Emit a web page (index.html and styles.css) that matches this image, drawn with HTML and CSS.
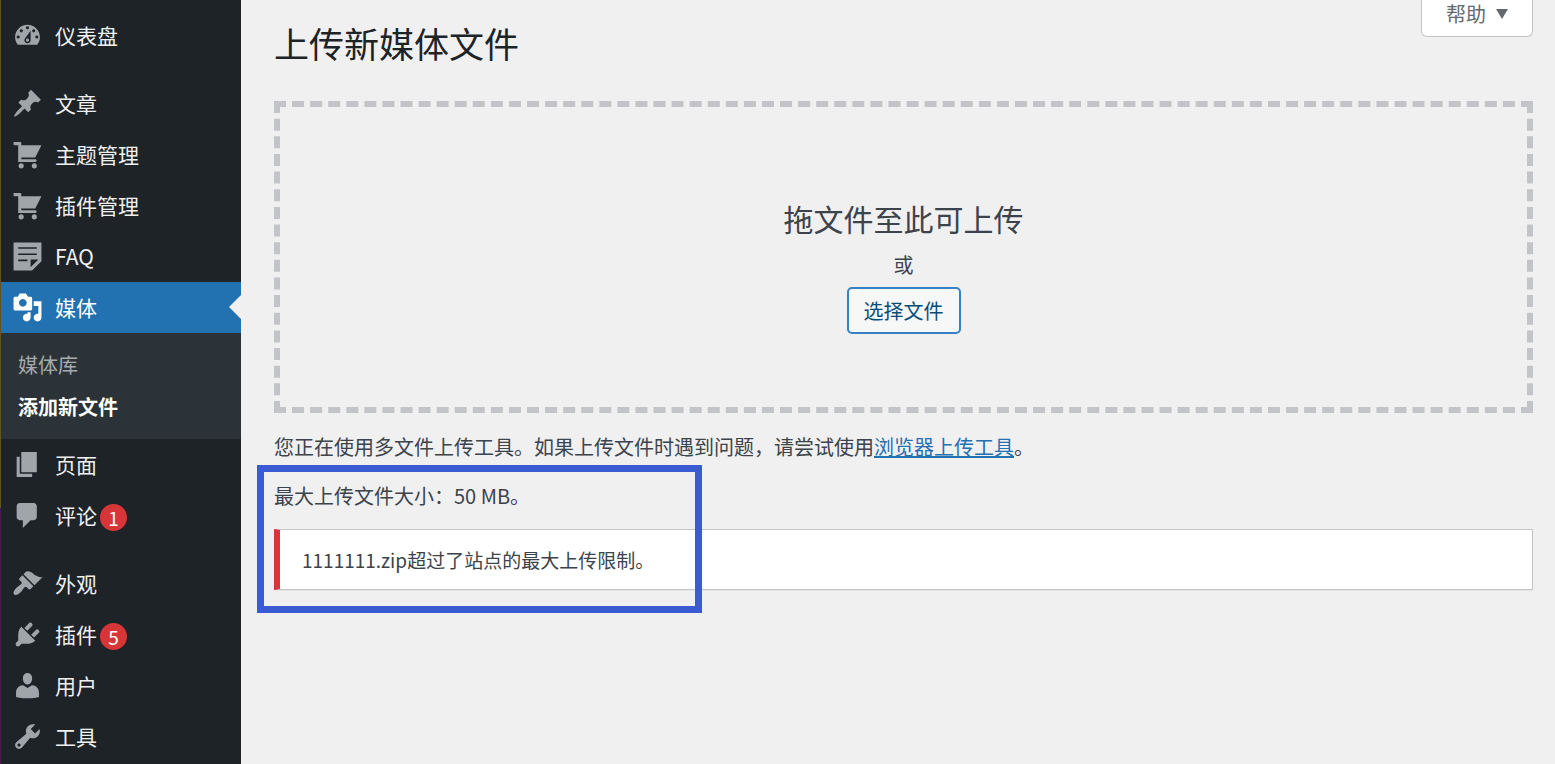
FILE: index.html
```html
<!DOCTYPE html>
<html lang="zh-CN">
<head>
  <meta charset="UTF-8">
  <meta name="viewport" content="width=device-width, initial-scale=1.0">
  <title>上传新媒体文件</title>
  <link rel="stylesheet" href="styles.css">
</head>
<body>
  <nav class="sidebar">
    <ul class="menu">
      <li><a class="menu-item" href="#">
        <svg class="icon" viewBox="0 0 20 20"><path d="M3.76 16h12.48C17.34 14.63 18 12.89 18 11c0-4.42-3.58-8-8-8s-8 3.58-8 8c0 1.89.66 3.63 1.76 5zM10 4c.55 0 1 .45 1 1s-.45 1-1 1-1-.45-1-1 .45-1 1-1zM6 6c.55 0 1 .45 1 1s-.45 1-1 1-1-.45-1-1 .45-1 1-1zm8 0c.55 0 1 .45 1 1s-.45 1-1 1-1-.45-1-1 .45-1 1-1zm-5.37 5.55L12 7v6c0 1.1-.9 2-2 2s-2-.9-2-2c0-.57.24-1.08.63-1.45zM4 10c.55 0 1 .45 1 1s-.45 1-1 1-1-.45-1-1 .45-1 1-1zm12 0c.55 0 1 .45 1 1s-.45 1-1 1-1-.45-1-1 .45-1 1-1zm-5 3c0-.55-.45-1-1-1s-1 .45-1 1 .45 1 1 1 1-.45 1-1z" fill-rule="evenodd"/></svg>
        <span class="label">仪表盘</span>
      </a></li>
      <li class="separator"></li>
      <li><a class="menu-item" href="#">
        <svg class="icon" viewBox="0 0 20 20"><path d="M10.44 3.02l1.82-1.82 6.36 6.35-1.83 1.82c-1.05-.68-2.48-.57-3.41.36l-.75.75c-.92.93-1.04 2.35-.35 3.41l-1.83 1.82-2.41-2.41-2.8 2.79c-.42.42-3.38 2.71-3.8 2.29s1.86-3.39 2.28-3.81l2.79-2.79L4.1 9.36l1.83-1.82c1.05.69 2.48.57 3.4-.36l.75-.75c.93-.92 1.05-2.35.36-3.41z"/></svg>
        <span class="label">文章</span>
      </a></li>
      <li><a class="menu-item" href="#">
        <svg class="icon" viewBox="0 0 20 20"><path d="M1 2h4.5c.3 0 .5.2.5.5V4h13l-4 8H6v1h9c.5 0 .9.4.9.9s-.4.9-.9.9H4V4H1.6C1.3 4 1 3.700 1 3.400zM5.900 15.700c1 0 1.700.7 1.700 1.650S6.900 19 5.900 19s-1.650-.7-1.650-1.650.7-1.650 1.650-1.650zm8.500 0c1 0 1.650.7 1.650 1.650S15.400 19 14.400 19s-1.650-.7-1.650-1.650.7-1.650 1.650-1.650z"/></svg>
        <span class="label">主题管理</span>
      </a></li>
      <li><a class="menu-item" href="#">
        <svg class="icon" viewBox="0 0 20 20"><path d="M1 2h4.5c.3 0 .5.2.5.5V4h13l-4 8H6v1h9c.5 0 .9.4.9.9s-.4.9-.9.9H4V4H1.6C1.3 4 1 3.700 1 3.400zM5.900 15.700c1 0 1.700.7 1.700 1.650S6.900 19 5.900 19s-1.650-.7-1.650-1.650.7-1.650 1.650-1.650zm8.500 0c1 0 1.650.7 1.650 1.650S15.400 19 14.400 19s-1.650-.7-1.650-1.650.7-1.650 1.650-1.650z"/></svg>
        <span class="label">插件管理</span>
      </a></li>
      <li><a class="menu-item" href="#">
        <svg class="icon" viewBox="0 0 20 20"><path d="M1 1h18v12l-6 6H1V1zm3 3v1h12V4H4zm0 4v1h12V8H4zm6 5v-1H4v1h6zm2 4l5-5h-5v5z" fill-rule="evenodd"/></svg>
        <span class="label">FAQ</span>
      </a></li>
      <li>
        <a class="menu-item current" href="#">
          <svg class="icon" viewBox="0 0 20 20"><path d="M13 11V4c0-.55-.45-1-1-1h-1.67L9 1H5L3.67 3H2c-.55 0-1 .45-1 1v7c0 .55.45 1 1 1h10c.55 0 1-.45 1-1zM7 4.500c1.380 0 2.500 1.120 2.500 2.500S8.380 9.500 7 9.500 4.500 8.380 4.500 7 5.620 4.500 7 4.500zM14 6h5v10.500c0 1.380-1.120 2.500-2.500 2.500S14 17.880 14 16.500s1.120-2.500 2.500-2.500c.17 0 .34.02.5.05V9h-3V6zm-4 8.050V13h2v3.500c0 1.380-1.120 2.500-2.500 2.500S7 17.880 7 16.500 8.120 14 9.500 14c.17 0 .34.02.5.05z" fill-rule="evenodd"/></svg>
          <span class="label">媒体</span>
        </a>
        <ul class="submenu">
          <li><a href="#">媒体库</a></li>
          <li><a class="active" href="#">添加新文件</a></li>
        </ul>
      </li>
      <li><a class="menu-item" href="#">
        <svg class="icon" viewBox="0 0 20 20"><path d="M6 15V2h10v13H6zm-1 1h8v2H3V5h2v11z"/></svg>
        <span class="label">页面</span>
      </a></li>
      <li><a class="menu-item" href="#">
        <svg class="icon" viewBox="0 0 20 20"><path d="M5 2h9c1.1 0 2 .9 2 2v7c0 1.1-.9 2-2 2h-2l-5 5v-5H5c-1.1 0-2-.9-2-2V4c0-1.1.9-2 2-2z"/></svg>
        <span class="label">评论</span><span class="badge">1</span>
      </a></li>
      <li class="separator"></li>
      <li><a class="menu-item" href="#">
        <svg class="icon" viewBox="0 0 20 20"><path d="M14.48 11.06L7.41 3.99l1.5-1.5c.5-.56 2.3-.47 3.51.32 1.21.8 1.43 1.28 2.91 2.1 1.18.64 2.45 1.26 4.45.85zm-.71.71L6.7 4.7 4.93 6.47c-.39.39-.39 1.02 0 1.41l1.06 1.06c.39.39.39 1.03 0 1.42-.6.6-1.43 1.11-2.21 1.69-.35.26-.7.53-1.01.84C1.43 14.23.4 16.08 1.4 17.07c.99 1 2.84-.03 4.18-1.36.31-.31.58-.66.85-1.02.57-.78 1.08-1.61 1.69-2.21.39-.39 1.02-.39 1.41 0l1.06 1.06c.39.39 1.02.39 1.41 0z"/></svg>
        <span class="label">外观</span>
      </a></li>
      <li><a class="menu-item" href="#">
        <svg class="icon" viewBox="0 0 20 20"><path d="M13.11 4.36L9.87 7.6 8 5.73l3.24-3.24c.35-.34 1.05-.2 1.56.32.52.51.66 1.21.31 1.55zm-8 1.77l.91-1.12 9.01 9.01-1.19.84c-.71.71-2.63 1.16-3.82 1.16H6.14L4.9 17.26c-.59.59-1.54.59-2.12 0-.59-.58-.59-1.53 0-2.12l1.24-1.24v-3.88c0-1.13.4-3.19 1.09-3.89zm7.26 3.97l3.24-3.24c.34-.35 1.04-.21 1.55.31.52.51.66 1.21.31 1.55l-3.24 3.25z"/></svg>
        <span class="label">插件</span><span class="badge">5</span>
      </a></li>
      <li><a class="menu-item" href="#">
        <svg class="icon" viewBox="0 0 20 20"><path d="M10 9.400c-1.900 0-3-1.900-3-4C7 3.300 8.200 2 10 2s3 1.300 3 3.400c0 2.100-1.100 4-3 4zM10 11.600L12.900 9.800c2.600 0 4.500 2.200 4.500 4.800v2.600c0 .4-3.400 1.100-7.400 1.100s-7.400-.7-7.400-1.100v-2.600c0-2.600 1.900-4.800 4.500-4.800z"/></svg>
        <span class="label">用户</span>
      </a></li>
      <li><a class="menu-item" href="#">
        <svg class="icon" viewBox="0 0 20 20"><path d="M16.68 9.77c-1.34 1.34-3.3 1.67-4.95.99l-5.41 6.52c-.99.99-2.59.99-3.58 0s-.99-2.59 0-3.57l6.52-5.42c-.68-1.65-.35-3.61.99-4.95 1.28-1.28 3.12-1.62 4.72-1.06l-2.89 2.89 2.82 2.82 2.86-2.87c.53 1.58.18 3.39-1.08 4.65zM3.81 16.21c.4.39 1.04.39 1.43 0 .4-.4.4-1.04 0-1.43-.39-.4-1.03-.4-1.43 0-.39.39-.39 1.03 0 1.43z" fill-rule="evenodd"/></svg>
        <span class="label">工具</span>
      </a></li>
    </ul>
  </nav>

  <main class="content">
    <header class="page-header">
      <h1>上传新媒体文件</h1>
      <button type="button" class="help">帮助 <svg class="caret" viewBox="0 0 12 10"><path d="M0 0h12L6 10z"/></svg></button>
    </header>

    <section class="dropzone">
      <p class="drop-title">拖文件至此可上传</p>
      <p class="drop-or">或</p>
      <button type="button" class="select-file">选择文件</button>
    </section>

    <p class="hint">您正在使用多文件上传工具。如果上传文件时遇到问题，请尝试使用<a href="#">浏览器上传工具</a>。</p>

    <div class="result">
      <p class="max-size">最大上传文件大小：50 MB。</p>
      <div class="notice">1111111.zip超过了站点的最大上传限制。</div>
      <div class="highlight"></div>
    </div>
  </main>
</body>
</html>
```
FILE: styles.css
```css
* {
  box-sizing: border-box;
}
body {
  display: flex;
  min-height: 100vh;
  margin: 0;
  background: #f0f0f1;
  color: #3c434a;
  font-family: "Noto Sans CJK SC", sans-serif;
  font-size: 20px;
  line-height: 30px;
}
h1, p, ul {
  margin: 0;
  padding: 0;
}
ul {
  list-style: none;
}
button {
  font-family: inherit;
  font-size: 20px;
  line-height: 30px;
  cursor: pointer;
}

/* Sidebar */
.sidebar {
  flex: none;
  width: 241px;
  padding-left: 1px;
  background: linear-gradient(#65531f 508px, #4b1656 508px);
}
.menu {
  min-height: 100%;
  padding-top: 10px;
  background: #1d2327;
}
.menu-item {
  position: relative;
  display: flex;
  align-items: center;
  height: 51px;
  padding-left: 11px;
  color: #f0f0f1;
  font-size: 21px;
  text-decoration: none;
}
.icon {
  width: 31px;
  height: 31px;
  margin-right: 12px;
  fill: #a0a5aa;
}
.label {
  padding-bottom: 2px;
}
.separator {
  height: 17px;
}
.current {
  background: #2271b1;
  color: #fff;
}
.current .icon {
  fill: #fff;
}
.current::after {
  content: "";
  position: absolute;
  top: 13px;
  right: 0;
  border: 12px solid transparent;
  border-left: 0;
  border-right-color: #f0f0f1;
}
.badge {
  width: 27px;
  height: 27px;
  margin-top: 3px;
  margin-left: 3px;
  border-radius: 50%;
  background: #d63638;
  color: #fff;
  font-size: 19px;
  line-height: 27px;
  text-align: center;
}
.submenu {
  padding: 11px 0;
  background: #2c3338;
}
.submenu a {
  display: block;
  padding: 6px 17px;
  color: #a7aaad;
  text-decoration: none;
}
.submenu .active {
  color: #fff;
  font-weight: 700;
}

/* Content */
.content {
  flex: 1;
  padding: 0 22px 0 33px;
}
.page-header {
  display: flex;
  justify-content: space-between;
  align-items: flex-start;
  height: 101px;
}
h1 {
  padding-top: 18px;
  color: #1d2327;
  font-size: 35px;
  font-weight: 400;
  line-height: 50px;
}
.help {
  display: flex;
  align-items: center;
  gap: 10px;
  height: 37px;
  padding: 0 24px 9px;
  border: 1px solid #c3c4c7;
  border-top: 0;
  border-radius: 0 0 6px 6px;
  background: #fff;
  color: #646970;
}
.caret {
  width: 12px;
  height: 10px;
  fill: #646970;
}
.dropzone {
  display: flex;
  flex-direction: column;
  align-items: center;
  padding: 90px 20px 73px;
  border: 6px dashed #c3c4c7;
}
.drop-title {
  font-size: 30px;
  line-height: 42px;
}
.drop-or {
  margin: 11px 0 7px;
}
.select-file {
  height: 47px;
  padding: 0 15px;
  border: 2px solid #3582c4;
  border-radius: 5px;
  background: #f6f7f7;
  color: #0a4b78;
}
.hint {
  margin: 19px 0;
}
.hint a {
  color: #2271b1;
}

/* Upload result */
.result {
  position: relative;
}
.notice {
  margin-top: 18px;
  padding: 15px 22px 14px;
  border: 1px solid #c3c4c7;
  border-left: 6px solid #d63638;
  background: #fff;
  box-shadow: 0 1px 1px rgba(0,0,0,0.04);
  font-size: 19px;
}
.highlight {
  position: absolute;
  top: -16px;
  bottom: -23px;
  left: -17px;
  width: 445px;
  border: 7px solid #3a5bd2;
  pointer-events: none;
}
```
